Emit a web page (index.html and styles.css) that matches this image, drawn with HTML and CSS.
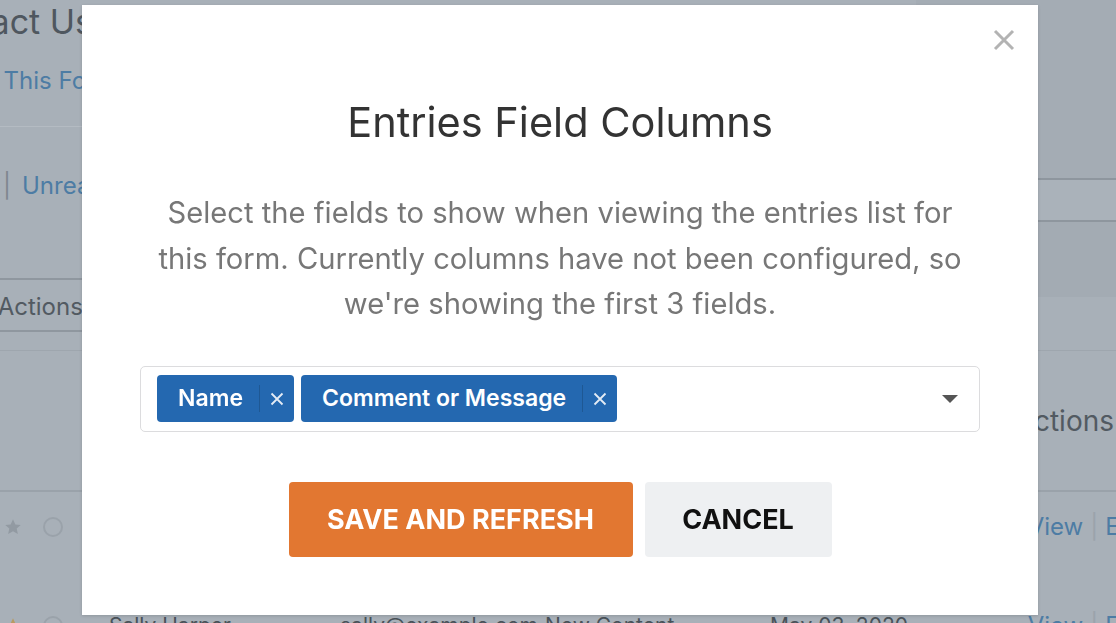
FILE: index.html
```html
<!DOCTYPE html>
<html lang="en">
<head>
<meta charset="utf-8">
<title>Entries Field Columns</title>
<link rel="stylesheet" href="styles.css">
</head>
<body>
<div class="page">
  <div class="top">
    <div class="lcol">
      <div class="l-title"><span class="bg-title">Contact Us</span></div>
      <div class="l-link"><span class="bg-link edit-link">Edit This Form</span></div>
      <div class="l-filter"><span class="bg-sep">|</span><span class="bg-link">Unread</span></div>
      <div class="l-bulk"><span class="bg-text bulk-text">Bulk Actions</span></div>
    </div>
    <div class="rcol">
      <div class="r-gap"></div>
      <div class="r-search"></div>
      <div class="r-band"></div>
    </div>
  </div>
  <div class="thead">
    <span></span>
    <span class="bg-text th-actions">Actions</span>
  </div>
  <div class="trow">
    <div class="row-icons">
      <svg class="star" viewBox="0 0 20 20" width="18" height="18"><path d="M10 1.5l2.6 5.6 6 .6-4.5 4.1 1.3 6-5.4-3.1-5.4 3.1 1.3-6L1.4 7.7l6-.6z"/></svg>
      <span class="ring"></span>
    </div>
    <div class="row-links"><span class="bg-link">View</span><span class="bg-sep small">|</span><span class="bg-link">Edit</span></div>
  </div>
  <div class="trow last">
    <div class="row-icons">
      <svg class="star gold" viewBox="0 0 20 20" width="18" height="18"><path d="M10 1.5l2.6 5.6 6 .6-4.5 4.1 1.3 6-5.4-3.1-5.4 3.1 1.3-6L1.4 7.7l6-.6z"/></svg>
      <span class="ring"></span>
    </div>
    <div class="cells">
      <span class="cell c1">Sally Harper</span>
      <span class="cell c2">sally@example.com</span>
      <span class="cell c3">New Content</span>
      <span class="cell c4">May 03, 2020</span>
    </div>
    <div class="row-links"><span class="bg-link">View</span><span class="bg-sep small">|</span><span class="bg-link">Edit</span></div>
  </div>
</div>

<div class="modal" role="dialog" aria-labelledby="modal-title">
  <button class="close" aria-label="Close">
    <svg viewBox="0 0 24 24" width="24" height="24"><path d="M3 3L21 21M21 3L3 21"/></svg>
  </button>
  <h2 id="modal-title" class="modal-title">Entries Field Columns</h2>
  <p class="modal-desc">Select the fields to show when viewing the entries list for<br>this form. Currently columns have not been configured, so<br>we're showing the first 3 fields.</p>
  <div class="select">
    <span class="tag"><span class="tag-label">Name</span><span class="tag-x"><svg viewBox="0 0 14 14" width="14" height="14"><path d="M1.5 1.5L12.5 12.5M12.5 1.5L1.5 12.5"/></svg></span></span>
    <span class="tag"><span class="tag-label">Comment or Message</span><span class="tag-x"><svg viewBox="0 0 14 14" width="14" height="14"><path d="M1.5 1.5L12.5 12.5M12.5 1.5L1.5 12.5"/></svg></span></span>
    <span class="caret"></span>
  </div>
  <div class="actions">
    <button class="btn btn-save">Save and Refresh</button>
    <button class="btn btn-cancel">Cancel</button>
  </div>
</div>
</body>
</html>
```

FILE: styles.css
```css
html, body {
  margin: 0;
  padding: 0;
}
body {
  width: 1116px;
  height: 623px;
  overflow: hidden;
  background: #a8b0b8;
  font-family: Inter, "Liberation Sans", Arial, sans-serif;
}
.page {
  width: 1116px;
  height: 623px;
  overflow: hidden;
  display: flex;
  flex-direction: column;
}
.page > * {
  flex-shrink: 0;
}
.top {
  height: 350px;
  display: flex;
  justify-content: space-between;
}
.lcol {
  width: 200px;
  display: flex;
  flex-direction: column;
}
.l-title {
  height: 50px;
  white-space: nowrap;
}
.bg-title {
  display: inline-block;
  margin-left: -86px;
  font-size: 34px;
  line-height: 44px;
  color: #4f575f;
}
.l-link {
  height: 77px;
  box-sizing: border-box;
  padding-top: 17px;
  border-bottom: 1px solid #b4bbc2;
  white-space: nowrap;
}
.bg-link {
  font-size: 24px;
  line-height: 28px;
  color: #4d7ca4;
}
.edit-link {
  display: inline-block;
  margin-left: -46px;
}
.l-filter {
  height: 151px;
  box-sizing: border-box;
  padding-top: 45px;
  display: flex;
  align-items: flex-start;
  white-space: nowrap;
}
.bg-sep {
  font-size: 24px;
  line-height: 28px;
  color: #7f878f;
  margin-left: 3px;
  margin-right: 11px;
}
.l-bulk {
  height: 54px;
  box-sizing: border-box;
  padding-top: 4px;
  border-top: 2px solid #8f979f;
  border-bottom: 2px solid #8f979f;
  display: flex;
  align-items: center;
  white-space: nowrap;
}
.bg-text {
  font-size: 24px;
  line-height: 28px;
  color: #525a62;
}
.bulk-text {
  margin-left: -58px;
}
.rcol {
  width: 200px;
  display: flex;
  flex-direction: column;
}
.r-gap {
  height: 178px;
  background: #a4acb4;
}
.r-search {
  height: 44px;
  box-sizing: border-box;
  border-top: 2px solid #8e969e;
  border-bottom: 2px solid #8e969e;
  background: #aab2ba;
}
.r-band {
  height: 75px;
  background: #a3abb3;
}
.thead {
  height: 142px;
  box-sizing: border-box;
  border-top: 1px solid #9ea6ae;
  border-bottom: 2px solid #9aa2aa;
  display: flex;
  justify-content: space-between;
  align-items: center;
  overflow: hidden;
}
.th-actions {
  font-size: 28px;
  margin-right: 2px;
  white-space: nowrap;
}
.trow {
  height: 110px;
  box-sizing: border-box;
  padding-top: 21px;
  display: flex;
  justify-content: space-between;
  align-items: flex-start;
  white-space: nowrap;
}
.trow.last {
  height: 40px;
  padding-top: 10px;
}
.row-icons {
  display: flex;
  align-items: center;
  gap: 21px;
  padding-left: 4px;
  height: 28px;
}
.star {
  fill: #929aa2;
}
.star.gold {
  fill: #b79b63;
}
.ring {
  width: 16px;
  height: 16px;
  border: 2px solid #9aa2aa;
  border-radius: 50%;
}
.row-links {
  display: flex;
  align-items: center;
  margin-right: -32px;
}
.bg-sep.small {
  color: #9ba3ab;
  margin: 0 7px;
}
.cells {
  flex: 1;
  display: flex;
  padding-left: 46px;
}
.cell {
  font-size: 21px;
  line-height: 28px;
  color: #4a5259;
}
.c1 { width: 231px; }
.c2 { width: 205px; }
.c3 { width: 225px; }

/* modal */
.modal {
  position: fixed;
  left: 82px;
  top: 5px;
  width: 956px;
  height: 610px;
  box-sizing: border-box;
  background: #ffffff;
  box-shadow: 0 1px 3px rgba(0, 0, 0, 0.15);
  display: flex;
  flex-direction: column;
  align-items: center;
  padding-top: 94px;
}
.close {
  position: absolute;
  left: 910px;
  top: 23px;
  width: 24px;
  height: 24px;
  padding: 0;
  border: 0;
  background: none;
}
.close svg {
  display: block;
  stroke: #b3b3b3;
  stroke-width: 3;
  fill: none;
}
.modal-title {
  margin: 0;
  font-size: 41.5px;
  line-height: 46px;
  font-weight: 400;
  color: #333333;
}
.modal-desc {
  margin: 45px 0 0;
  width: 900px;
  text-align: center;
  font-size: 29.2px;
  line-height: 45.5px;
  color: #777777;
  white-space: nowrap;
}
.select {
  margin-top: 39px;
  width: 840px;
  height: 66px;
  box-sizing: border-box;
  border: 1px solid #dcdcde;
  border-radius: 5px;
  display: flex;
  align-items: center;
  gap: 7px;
  padding: 0 21px 0 16px;
}
.tag {
  height: 47px;
  display: flex;
  align-items: center;
  background: #2468b0;
  border-radius: 4px;
  color: #ffffff;
}
.tag-label {
  padding: 0 16px 0 21px;
  font-size: 23px;
  font-weight: 600;
  line-height: 47px;
}
.tag-x {
  height: 27px;
  width: 34px;
  border-left: 1px solid #1e5894;
  display: flex;
  align-items: center;
  justify-content: center;
}
.tag-x svg {
  stroke: #e4ecf5;
  stroke-width: 1.8;
  fill: none;
}
.caret {
  margin-left: auto;
  width: 0;
  height: 0;
  border-left: 8px solid transparent;
  border-right: 8px solid transparent;
  border-top: 8px solid #555555;
}
.actions {
  margin-top: 50px;
  display: flex;
  gap: 12px;
}
.btn {
  height: 75px;
  border: 0;
  border-radius: 4px;
  font-family: Inter, "Liberation Sans", Arial, sans-serif;
  font-size: 27px;
  font-weight: 700;
  text-transform: uppercase;
  padding: 0;
}
.btn-save {
  width: 344px;
  background: #e27731;
  color: #ffffff;
}
.btn-cancel {
  width: 187px;
  background: #eef0f2;
  color: #111111;
}
```
